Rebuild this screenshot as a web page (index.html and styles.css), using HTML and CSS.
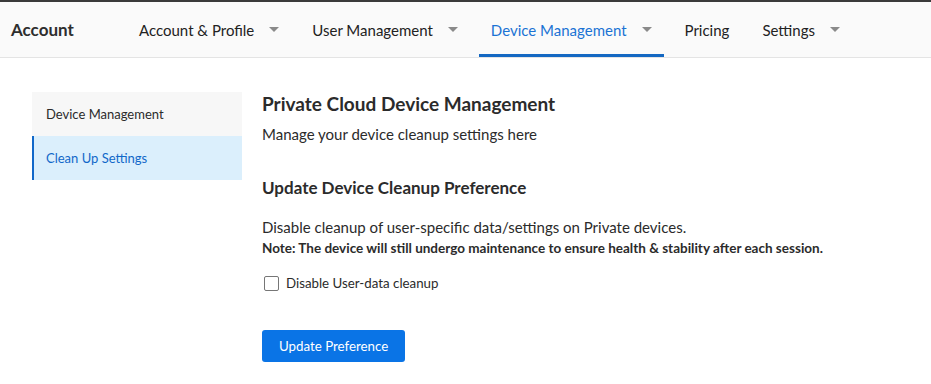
FILE: index.html
```html
<!DOCTYPE html>
<html>
<head>
<meta charset="utf-8">
<link rel="stylesheet" href="styles.css">
</head>
<body>
<header class="topbar">
  <div class="brand">Account</div>
  <nav class="nav">
    <div class="nav-item">Account &amp; Profile<span class="caret"></span></div>
    <div class="nav-item">User Management<span class="caret"></span></div>
    <div class="nav-item active">Device Management<span class="caret"></span></div>
    <div class="nav-item">Pricing</div>
    <div class="nav-item">Settings<span class="caret"></span></div>
  </nav>
</header>
<main class="layout">
  <aside class="sidebar">
    <div class="side-item">Device Management</div>
    <div class="side-item selected">Clean Up Settings</div>
  </aside>
  <section class="content">
    <h1 class="title">Private Cloud Device Management</h1>
    <p class="subtitle">Manage your device cleanup settings here</p>
    <h2 class="section-title">Update Device Cleanup Preference</h2>
    <p class="desc">Disable cleanup of user-specific data/settings on Private devices.</p>
    <p class="note">Note: The device will still undergo maintenance to ensure health &amp; stability after each session.</p>
    <label class="check"><span class="box"></span>Disable User-data cleanup</label>
    <button class="btn">Update Preference</button>
  </section>
</main>
</body>
</html>
```
FILE: styles.css
```css
* { box-sizing: border-box; }
html, body { margin: 0; padding: 0; background: #fff; }
body {
  font-family: "Lato", "Noto Sans", sans-serif;
  color: #2b2b2b;
  width: 931px;
  height: 384px;
  overflow: hidden;
}
.topbar {
  height: 58px;
  border-top: 2px solid #3a3a3a;
  border-bottom: 1px solid #e4e4e4;
  background: #fafafa;
  display: flex;
  align-items: stretch;
}
.brand {
  font-weight: 700;
  font-size: 17px;
  color: #2e2e2e;
  padding-left: 11px;
  width: 127px;
  display: flex;
  align-items: center;
}
.nav { display: flex; align-items: stretch; gap: 9px; }
.nav-item {
  display: flex;
  align-items: center;
  padding: 3px 12px 0;
  font-size: 15px;
  color: #222;
  border-bottom: 3px solid transparent;
}
.nav-item.active {
  color: #1a73d4;
  border-bottom-color: #1468c2;
}
.caret {
  width: 0; height: 0;
  border-left: 5px solid transparent;
  border-right: 5px solid transparent;
  border-top: 5px solid #8a8a8a;
  margin-left: 15px;
}
.layout {
  display: flex;
  padding: 34px 0 0 32px;
}
.sidebar { width: 210px; flex: none; }
.side-item {
  height: 44px;
  display: flex;
  align-items: center;
  padding-left: 14px;
  font-size: 13px;
  background: #f7f7f7;
  color: #2b2b2b;
}
.side-item.selected {
  background: #dbeffc;
  color: #1168c9;
  border-left: 2px solid #1168c9;
  padding-left: 12px;
}
.content { padding-left: 20px; }
.title {
  margin: 0;
  font-size: 19px;
  font-weight: 700;
  line-height: 24px;
  color: #2b2b2b;
}
.subtitle { margin: 8px 0 0; font-size: 15px; line-height: 20px; }
.section-title {
  margin: 32px 0 0;
  font-size: 17px;
  font-weight: 700;
  line-height: 24px;
}
.desc { margin: 17px 0 0; font-size: 15px; line-height: 20px; }
.note { margin: 1px 0 0; font-size: 13.5px; font-weight: 700; line-height: 20px; }
.check {
  display: flex;
  align-items: center;
  margin-top: 15px;
  font-size: 13.3px;
  line-height: 20px;
}
.box {
  width: 15px; height: 15px;
  border: 1.5px solid #767676;
  border-radius: 2px;
  margin: 0 7px 0 2px;
  background: #fff;
}
.btn {
  display: block;
  margin-top: 37px;
  height: 32px;
  padding: 0 17px;
  background: #0a74e6;
  color: #fff;
  border: none;
  border-radius: 3px;
  font-family: inherit;
  font-size: 13.3px;
}
```
